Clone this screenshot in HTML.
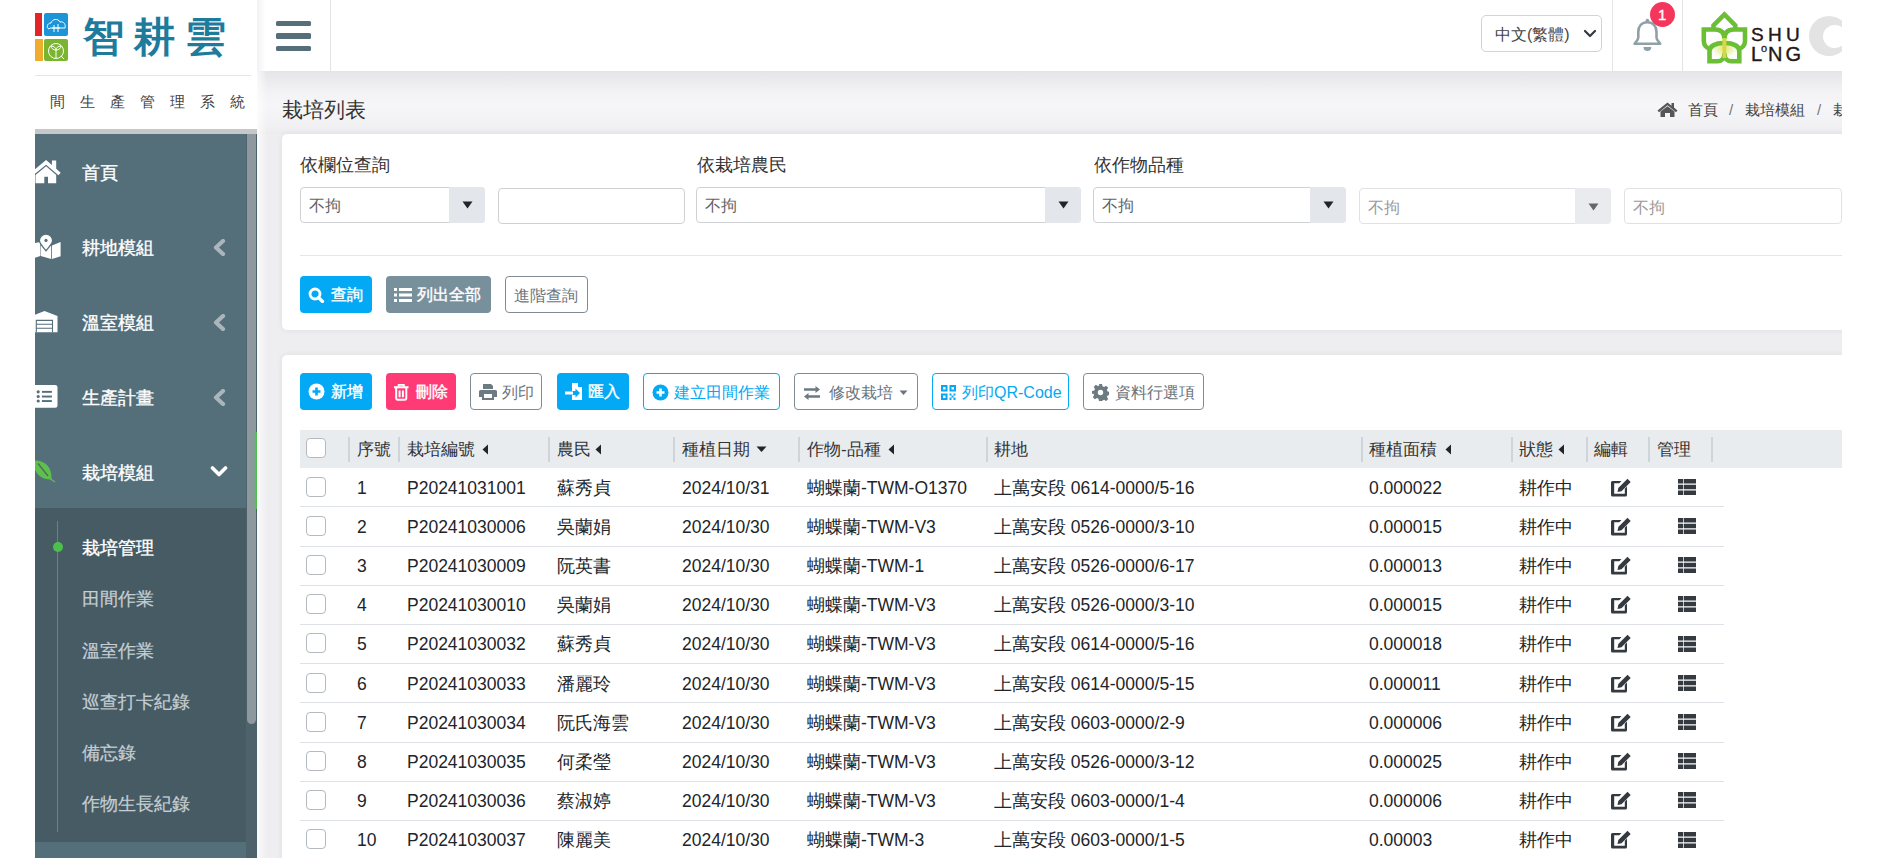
<!DOCTYPE html>
<html><head><meta charset="utf-8">
<style>
*{box-sizing:border-box;margin:0;padding:0}
html,body{width:1878px;height:858px;overflow:hidden;background:#fff;font-family:"Liberation Sans",sans-serif;color:#212529}
#wrap{position:absolute;left:0;top:0;width:1842px;height:858px;overflow:hidden;clip-path:inset(0 0 0 35px);background:#eeeef1}
.a{position:absolute}
.t{position:absolute;white-space:nowrap;line-height:1}
/* sidebar */
#side{position:absolute;left:35px;top:0;width:222px;height:858px;background:#546e7a}
#logo{position:absolute;left:0;top:0;width:222px;height:129px;background:#fff}
.mi{position:absolute;left:82px;color:#fff;font-size:17.5px;font-weight:normal;line-height:1;margin-top:1.5px;-webkit-text-stroke:0.35px #fff}
.si{position:absolute;left:82px;color:#c5ced3;font-size:17.5px;line-height:1;margin-top:1.5px;-webkit-text-stroke:0.2px #c5ced3}
/* header */
#hdr{position:absolute;left:257px;top:0;width:1585px;height:71px;background:#fff;box-shadow:0 2px 10px rgba(0,0,0,.08)}
.card{position:absolute;background:#fff;border-radius:5px;box-shadow:0 0 6px rgba(0,0,0,.07)}
.sel{position:absolute;height:36px;border:1px solid #cfd1d4;border-radius:4px;background:#fff}
.sel .add{position:absolute;right:-1px;top:-1px;bottom:-1px;width:36px;background:#e3e6ea;border-radius:0 4px 4px 0}
.sel .txt{position:absolute;left:7.5px;top:9.5px;font-size:15.5px;color:#5f6367;line-height:1;white-space:nowrap}
.btn{position:absolute;height:37px;border-radius:4px;font-size:16px;line-height:1;white-space:nowrap}
.btn span{position:absolute;top:11px}
.hd{font-size:17px;color:#333}
.td{font-size:17.5px;color:#212529}
</style></head><body>
<div id="wrap">
  <!-- sidebar -->
  <div class="a" style="left:35px;top:0;width:222px;height:858px;background:#546e7a"></div>
  <div class="a" style="left:35px;top:0;width:222px;height:129px;background:#fff"></div>
  <div class="a" style="left:35px;top:129px;width:222px;height:5px;background:#c6c7c8"></div>
  <!-- logo squares -->
  <div class="a" style="left:35px;top:13px;width:7px;height:23px;background:#e0262b"></div>
  <div class="a" style="left:44px;top:13px;width:24px;height:23px;background:#1b95d8;border-radius:2px"></div>
  <div class="a" style="left:35px;top:39px;width:8px;height:22px;background:#eead2e"></div>
  <div class="a" style="left:44px;top:39px;width:24px;height:22px;background:#7ab52f;border-radius:2px"></div>
  <svg class="a" style="left:44px;top:13px" width="24" height="48" viewBox="0 0 24 48" fill="none" stroke="#fff" stroke-width="1">
    <path d="M5 16c-3-1-2-6 2-6c1-4 7-5 9-1c4-1 6 3 5 6H6z"/><path d="M10 12v7M14 11v8M8 15h8"/>
    <circle cx="12" cy="38" r="7.5"/><path d="M12 45v-8M12 37c-3 0-5-2-5-4c3 0 5 2 5 4M12 37c3 0 5-2 5-4c-3 0-5 2-5 4M17 43l3 3"/>
  </svg>
  <div class="t" style="left:83px;top:17px;font-size:41px;font-weight:bold;color:#1f7b9c;letter-spacing:10px">智耕雲</div>
  <div class="a" style="left:35px;top:75px;width:216px;height:1px;background:#e6e6e6"></div>
  <div class="t" style="left:50px;top:94px;font-size:15px;color:#444;letter-spacing:15px">間生產管理系統</div>
  <!-- menu -->
    <div class="a" style="left:35px;top:508px;width:222px;height:334px;background:#475b65"></div>
    <div class="a" style="left:246px;top:134px;width:11px;height:724px;background:#4e626b"></div>
  <div class="a" style="left:247px;top:134px;width:9px;height:590px;background:#8d999f;border-radius:0 0 5px 5px"></div>
  <div class="a" style="left:250px;top:432px;width:6px;height:77px;background:linear-gradient(90deg,rgba(76,192,74,0),rgba(76,192,74,.2))"></div>
  <div class="a" style="left:256px;top:432px;width:1px;height:77px;background:#4cc04a"></div>
  <div class="mi" style="top:163px">首頁</div>
  <div class="mi" style="top:238px">耕地模組</div>
  <div class="mi" style="top:313px">溫室模組</div>
  <div class="mi" style="top:388px">生產計畫</div>
  <div class="mi" style="top:463px">栽培模組</div>
  <!-- menu icons -->
  <svg class="a" style="left:33px;top:159px" width="30" height="26" viewBox="0 0 30 26"><path fill="#fff" d="M13.1 1L-3 14.3l2.3 2.6L13.1 5.7l12.3 10.6 2.3-2.6L23.2 9.8V1.5h-4.3v4.6z M2.5 15.9L13.1 7.3l10.1 8.6V24.3H15V17.8H11.3V24.3H2.5z"/></svg>
  <svg class="a" style="left:33px;top:228px" width="30" height="34" viewBox="0 0 30 34"><path fill="#fff" d="M0 15.5L7.3 14V28L0 30.3z M7.8 18H18.2V31L7.8 28z M19 17.5L27.6 14V28.2L19 31z"/><path d="M13 22.8C10 19 6.4 15.8 6.4 12.6A6.6 6.6 0 0 1 19.6 12.6C19.6 15.8 16 19 13 22.8z" fill="#fff" stroke="#546e7a" stroke-width="1.3"/><circle cx="13" cy="12.4" r="1.6" fill="#546e7a"/></svg>
  <svg class="a" style="left:30px;top:300px" width="30" height="36" viewBox="0 0 30 36"><path fill="#fff" d="M1.5 16L14.5 11L27.5 16V32.2H1.5z"/><path d="M6.3 32.2V20.4H22.5V32.2M6.3 24.3H22.5M6.3 28.2H22.5" stroke="#546e7a" stroke-width="1.1" fill="none"/></svg>
  <svg class="a" style="left:33px;top:385px" width="26" height="23" viewBox="0 0 26 23"><rect x="-4" y="0" width="28.5" height="22.8" rx="2.5" fill="#fff"/><g fill="#546e7a"><circle cx="5.2" cy="6.8" r="1.6"/><circle cx="5.2" cy="11.5" r="1.6"/><circle cx="5.2" cy="16" r="1.6"/><rect x="8.9" y="5.9" width="10" height="1.9"/><rect x="8.9" y="10.6" width="10" height="1.9"/><rect x="8.9" y="15.1" width="10" height="1.9"/></g></svg>
  <svg class="a" style="left:30px;top:452px" width="30" height="34" viewBox="0 0 30 34"><path d="M3 8.5C12 8 22 12 21.5 27.5C10 28 4 21 3 8.5z" fill="#5dc04c"/><path d="M8 11.5L18 24" stroke="#50695f" stroke-width="1.3"/><path d="M20.5 27L25 30" stroke="#6fae6a" stroke-width="1.5"/></svg>
  <!-- chevrons -->
  <svg class="a" style="left:213px;top:239px" width="13" height="17" viewBox="0 0 13 17"><path d="M10 2L3 8.5L10 15" stroke="#aab6bc" stroke-width="4.2" fill="none" stroke-linecap="round" stroke-linejoin="round"/></svg>
  <svg class="a" style="left:213px;top:314px" width="13" height="17" viewBox="0 0 13 17"><path d="M10 2L3 8.5L10 15" stroke="#aab6bc" stroke-width="4.2" fill="none" stroke-linecap="round" stroke-linejoin="round"/></svg>
  <svg class="a" style="left:213px;top:389px" width="13" height="17" viewBox="0 0 13 17"><path d="M10 2L3 8.5L10 15" stroke="#aab6bc" stroke-width="4.2" fill="none" stroke-linecap="round" stroke-linejoin="round"/></svg>
  <svg class="a" style="left:210px;top:465px" width="18" height="13" viewBox="0 0 18 13"><path d="M2.5 3L9 9.5L15.5 3" stroke="#fff" stroke-width="3.6" fill="none" stroke-linecap="round" stroke-linejoin="round"/></svg>
  <!-- submenu -->
  <div class="a" style="left:57px;top:521px;width:1px;height:311px;background:#6d7f88"></div>
  <div class="a" style="left:52.5px;top:542px;width:10px;height:10px;border-radius:50%;background:#4cc04a"></div>
  <div class="mi" style="top:538px">栽培管理</div>
  <div class="si" style="top:589px">田間作業</div>
  <div class="si" style="top:641px">溫室作業</div>
  <div class="si" style="top:692px">巡查打卡紀錄</div>
  <div class="si" style="top:743px">備忘錄</div>
  <div class="si" style="top:794px">作物生長紀錄</div>

  <!-- header -->
  <div class="a" style="left:257px;top:71px;width:1585px;height:63px;background:linear-gradient(#e5e5e8 0px,#f3f3f5 22px,#f6f6f8 35px,#f1f1f3 55px,#ececef 63px)"></div>
  <div class="a" style="left:257px;top:0;width:1585px;height:71px;background:#fff"></div>
  <div class="a" style="left:257px;top:71px;width:10px;height:787px;background:linear-gradient(90deg,rgba(255,255,255,.7),rgba(255,255,255,0))"></div>
  <div class="a" style="left:257px;top:0;width:9px;height:71px;background:linear-gradient(90deg,rgba(0,0,0,.05),rgba(0,0,0,0))"></div>
  <div class="a" style="left:276px;top:20.5px;width:35px;height:5.5px;background:#546e7a;border-radius:1.5px"></div>
  <div class="a" style="left:276px;top:33px;width:35px;height:5.5px;background:#546e7a;border-radius:1.5px"></div>
  <div class="a" style="left:276px;top:45.5px;width:35px;height:5.5px;background:#546e7a;border-radius:1.5px"></div>
  <div class="a" style="left:330px;top:0;width:1px;height:71px;background:#e4e4e4"></div>
  <div class="a" style="left:1612px;top:0;width:1px;height:71px;background:#e4e4e4"></div>
  <div class="a" style="left:1682px;top:0;width:1px;height:71px;background:#e4e4e4"></div>
  <!-- lang select -->
  <div class="a" style="left:1481px;top:15px;width:121px;height:37px;border:1px solid #d0d4d8;border-radius:5px"></div>
  <div class="t" style="left:1495px;top:27px;font-size:16px;color:#444">中文(繁體)</div>
  <svg class="a" style="left:1583px;top:29px" width="14" height="10" viewBox="0 0 14 10"><path d="M2 2l5 5 5-5" stroke="#343a40" stroke-width="2.2" fill="none" stroke-linecap="round" stroke-linejoin="round"/></svg>
  <!-- bell -->
  <svg class="a" style="left:1632px;top:17px" width="31" height="35" viewBox="0 0 31 35"><path d="M15.4 5.2C9.8 5.2 6.3 9.2 6.3 15V20.5C6.3 23.3 3.6 24.8 2.6 26.8H28.2C27.2 24.8 24.5 23.3 24.5 20.5V15C24.5 9.2 21 5.2 15.4 5.2z" stroke="#90a0a8" stroke-width="2.6" fill="none" stroke-linejoin="round"/><circle cx="15.4" cy="3.6" r="1.8" fill="#90a0a8"/><path d="M11.5 30H19.3A3.9 3.9 0 0 1 11.5 30z" fill="#90a0a8"/></svg>
  <div class="a" style="left:1650px;top:2px;width:25px;height:25px;border-radius:50%;background:#f5365c"></div>
  <div class="t" style="left:1658px;top:7px;font-size:15px;color:#fff;-webkit-text-stroke:0.4px #fff">1</div>
  <!-- shulong logo -->
  <svg class="a" style="left:1698px;top:8px" width="52" height="58" viewBox="0 0 52 58">
    <defs><radialGradient id="lg" cx="50%" cy="50%" r="50%"><stop offset="0" stop-color="#e8e86a"/><stop offset="0.5" stop-color="#eef5c0"/><stop offset="1" stop-color="#ffffff" stop-opacity="0"/></radialGradient></defs>
    <ellipse cx="26.4" cy="40" rx="16" ry="12" fill="url(#lg)"/>
    <g stroke="#6abf35" stroke-width="4.6" fill="none" stroke-linejoin="miter">
    <path d="M15.5 23V17.5L26.4 6.5L37.3 17.5V23"/>
    <path d="M26.4 31C26.4 24 22.5 21.5 17 21.5H5.8V33C5.8 37 8.5 40.5 13 41"/>
    <path d="M26.4 31C26.4 24 30.3 21.5 35.8 21.5H47V33C47 37 44.3 40.5 39.8 41"/>
    <path d="M25.5 35C18 35 11.5 38 11.5 43V53.3H19.5C23.8 53.3 26.4 50 26.4 45.5"/>
    <path d="M27.3 35C34.8 35 41.3 38 41.3 43V53.3H33.3C29 53.3 26.4 50 26.4 45.5"/>
    </g>
    <path d="M26.4 30V50" stroke="#d6d84a" stroke-width="4"/>
  </svg>
  <div class="t" style="left:1751px;top:24.5px;font-size:19px;color:#231815;letter-spacing:4.3px;-webkit-text-stroke:0.4px #231815">SHU</div>
  <div class="t" style="left:1751px;top:43.5px;font-size:20px;color:#231815;-webkit-text-stroke:0.4px #231815">L</div>
  <div class="t" style="left:1761px;top:43px;font-size:11px;color:#231815;-webkit-text-stroke:0.3px #231815">o</div>
  <div class="t" style="left:1768px;top:43.5px;font-size:20px;color:#231815;letter-spacing:3px;-webkit-text-stroke:0.4px #231815">NG</div>
  <div class="a" style="left:1809px;top:16px;width:40px;height:40px;border-radius:50%;background:#e3e3e3"></div>
  <div class="a" style="left:1823px;top:25px;width:24px;height:23px;border-radius:50%;background:#fff"></div>
  <!-- title / breadcrumb -->
  <div class="t" style="left:282px;top:99px;font-size:21px;color:#333">栽培列表</div>
  <svg class="a" style="left:1657px;top:102px" width="21" height="15" viewBox="0 0 21 15"><path fill="#555" d="M10.5 0.5L0.5 8.5l1.5 1.7L10.5 3.3l8.5 6.9 1.5-1.7-3.5-2.9V1h-2.5v2.7z M3.5 9.5V15h4.5v-4h5v4h4.5V9.5L10.5 4.2z"/></svg>
  <div class="t" style="left:1688px;top:102px;font-size:15px;color:#444">首頁</div>
  <div class="t" style="left:1729px;top:102px;font-size:15px;color:#777">/</div>
  <div class="t" style="left:1745px;top:102px;font-size:15px;color:#444">栽培模組</div>
  <div class="t" style="left:1817px;top:102px;font-size:15px;color:#777">/</div>
  <div class="t" style="left:1833px;top:102px;font-size:15px;color:#444">栽</div>


  <div class="card" style="left:282px;top:134px;width:1600px;height:196px"></div>
  <div class="t" style="left:300px;top:157px;font-size:17.5px;color:#333">依欄位查詢</div>
  <div class="t" style="left:697px;top:157px;font-size:17.5px;color:#333">依栽培農民</div>
  <div class="t" style="left:1094px;top:157px;font-size:17.5px;color:#333">依作物品種</div>
  <div class="sel" style="left:300px;top:187px;width:185px"><div class="add"></div><div class="txt">不拘</div></div>
  <svg class="a" style="left:462px;top:201px" width="11" height="8" viewBox="0 0 11 8"><path d="M0.5 0.5h10L5.5 7.5z" fill="#212529"/></svg>
  <div class="sel" style="left:498px;top:188px;width:187px"></div>
  <div class="sel" style="left:696px;top:187px;width:385px"><div class="add"></div><div class="txt">不拘</div></div>
  <svg class="a" style="left:1058px;top:201px" width="11" height="8" viewBox="0 0 11 8"><path d="M0.5 0.5h10L5.5 7.5z" fill="#212529"/></svg>
  <div class="sel" style="left:1093px;top:187px;width:253px"><div class="add"></div><div class="txt">不拘</div></div>
  <svg class="a" style="left:1323px;top:201px" width="11" height="8" viewBox="0 0 11 8"><path d="M0.5 0.5h10L5.5 7.5z" fill="#212529"/></svg>
  <div class="sel" style="left:1359px;top:188px;width:252px;border-color:#dfe2e5"><div class="add" style="background:#e9ebee"></div><div class="txt" style="color:#9a9a9a;top:11px">不拘</div></div>
  <svg class="a" style="left:1588px;top:203px" width="11" height="8" viewBox="0 0 11 8"><path d="M0.5 0.5h10L5.5 7.5z" fill="#666"/></svg>
  <div class="sel" style="left:1624px;top:188px;width:218px;border-color:#dfe2e5"><div class="txt" style="color:#9a9a9a;top:11px">不拘</div></div>
  <div class="a" style="left:300px;top:255px;width:1542px;height:1px;background:#e4e6e8"></div>
  <!-- buttons -->
  <div class="btn" style="left:300px;top:276px;width:72px;background:#03a9f4;color:#fff;-webkit-text-stroke:0.4px #fff">
    <svg class="a" style="left:8px;top:11px" width="17" height="16" viewBox="0 0 17 16"><circle cx="7" cy="7" r="5" stroke="#fff" stroke-width="2.8" fill="none"/><path d="M10.5 10.5l4 4" stroke="#fff" stroke-width="3.2" stroke-linecap="round"/></svg>
    <span style="left:31px">查詢</span></div>
  <div class="btn" style="left:386px;top:276px;width:105px;background:#78909c;color:#fff;-webkit-text-stroke:0.4px #fff">
    <svg class="a" style="left:8px;top:12px" width="18" height="14" viewBox="0 0 18 14"><path fill="#fff" d="M0 0h3v3H0zM5 0h13v3H5zM0 5.5h3v3H0zM5 5.5h13v3H5zM0 11h3v3H0zM5 11h13v3H5z"/></svg>
    <span style="left:31px">列出全部</span></div>
  <div class="btn" style="left:505px;top:276px;width:83px;border:1px solid #7f8c93;color:#6c757d">
    <span style="left:8px">進階查詢</span></div>

  <div class="card" style="left:282px;top:355px;width:1600px;height:600px"></div>
  <!-- action buttons -->
  <div class="btn" style="left:300px;top:373px;width:72px;background:#03a9f4;color:#fff;-webkit-text-stroke:0.4px #fff">
    <svg class="a" style="left:8px;top:10px" width="17" height="17" viewBox="0 0 17 17"><circle cx="8.5" cy="8.5" r="8" fill="#fff"/><path d="M8.5 4.5v8M4.5 8.5h8" stroke="#03a9f4" stroke-width="2.6"/></svg>
    <span style="left:31px">新增</span></div>
  <div class="btn" style="left:386px;top:373px;width:70px;background:#ff3a75;color:#fff;-webkit-text-stroke:0.4px #fff">
    <svg class="a" style="left:8px;top:11px" width="15" height="17" viewBox="0 0 15 17"><path d="M0 2.2H14.5V4.3H0z" fill="#fff"/><path d="M4.6 2.5V0.9H9.9V2.5" stroke="#fff" stroke-width="1.7" fill="none"/><path d="M2.2 4V14.6A1.1 1.1 0 0 0 3.3 15.7H11.2A1.1 1.1 0 0 0 12.3 14.6V4M5.6 6.5V13.2M8.9 6.5V13.2" stroke="#fff" stroke-width="2" fill="none"/></svg>
    <span style="left:30px">刪除</span></div>
  <div class="btn" style="left:470px;top:373px;width:72px;border:1px solid #7f8c93;color:#6c757d">
    <svg class="a" style="left:8px;top:10px" width="18" height="16" viewBox="0 0 18 16"><path fill="#6c7a82" d="M4 0h8l2 2v3H4z M1.5 6h15A1.5 1.5 0 0 1 18 7.5V13h-3v3H3v-3H0V7.5A1.5 1.5 0 0 1 1.5 6z"/><path fill="#fff" d="M5 10h8v4H5z"/></svg>
    <span style="left:31px">列印</span></div>
  <div class="btn" style="left:557px;top:373px;width:72px;background:#03a9f4;color:#fff;-webkit-text-stroke:0.4px #fff">
    <svg class="a" style="left:8px;top:10px" width="18" height="17" viewBox="0 0 18 17"><path fill="#fff" d="M7 0h6l4 4v13H7v-5h3.5v2.5L15 10l-4.5-4.5V8H7z M13 0v4h4z"/><path fill="#fff" d="M0 8.5h8v3H0z"/></svg>
    <span style="left:31px">匯入</span></div>
  <div class="btn" style="left:643px;top:373px;width:137px;border:1px solid #03a9f4;color:#03a9f4">
    <svg class="a" style="left:8px;top:10px" width="17" height="17" viewBox="0 0 17 17"><circle cx="8.5" cy="8.5" r="8" fill="#03a9f4"/><path d="M8.5 4.5v8M4.5 8.5h8" stroke="#fff" stroke-width="2.6"/></svg>
    <span style="left:30px">建立田間作業</span></div>
  <div class="btn" style="left:794px;top:373px;width:124px;border:1px solid #7f8c93;color:#6c757d">
    <svg class="a" style="left:8px;top:12px" width="18" height="14" viewBox="0 0 18 14"><path fill="#6c7a82" d="M12.5 0l4.5 3.5-4.5 3.5V4.8H1V2.2h11.5z M5.5 7v2.2H17v2.6H5.5V14L1 10.5z"/></svg>
    <span style="left:34px">修改栽培</span>
    <svg class="a" style="left:104px;top:16px" width="9" height="6" viewBox="0 0 9 6"><path d="M0.5 0.5h8L4.5 5z" fill="#6c757d"/></svg></div>
  <div class="btn" style="left:932px;top:373px;width:137px;border:1px solid #03a9f4;color:#03a9f4">
    <svg class="a" style="left:8px;top:11px" width="15" height="15" viewBox="0 0 15 15"><path fill="#03a9f4" d="M0 0h6.5v6.5H0zM2 2v2.5h2.5V2zM8.5 0H15v6.5H8.5zM10.5 2v2.5H13V2zM0 8.5h6.5V15H0zM2 10.5V13h2.5v-2.5zM8.5 8.5h2v2h-2zM12.5 8.5h2v2h-2zM10.5 10.5h2v2h-2zM8.5 12.5h2V15h-2zM12.5 12.5h2V15h-2z"/></svg>
    <span style="left:29px">列印QR-Code</span></div>
  <div class="btn" style="left:1083px;top:373px;width:121px;border:1px solid #7f8c93;color:#6c757d">
    <svg class="a" style="left:8px;top:10px" width="17" height="17" viewBox="0 0 17 17"><path fill="#6c7a82" d="M7 0h3l.5 2.3 1.6.7 2-1.3 2.1 2.1-1.3 2 .7 1.6 2.3.5v3l-2.3.5-.7 1.6 1.3 2-2.1 2.1-2-1.3-1.6.7L10 17H7l-.5-2.3-1.6-.7-2 1.3-2.1-2.1 1.3-2-.7-1.6L0 10V7l2.3-.5.7-1.6-1.3-2 2.1-2.1 2 1.3 1.6-.7z"/><circle cx="8.5" cy="8.5" r="2.7" fill="#fff"/></svg>
    <span style="left:31px">資料行選項</span></div>

  <div class="a" style="left:300px;top:430px;width:1542px;height:38px;background:#e9ecef"></div>
  <div class="a" style="left:306px;top:438px;width:20px;height:20px;border:1px solid #b4bac0;border-radius:4px;background:#fff"></div>
  <div class="a" style="left:348px;top:437px;width:2px;height:25px;background:#cfd4d9"></div>
  <div class="a" style="left:398px;top:437px;width:2px;height:25px;background:#cfd4d9"></div>
  <div class="a" style="left:548px;top:437px;width:2px;height:25px;background:#cfd4d9"></div>
  <div class="a" style="left:673px;top:437px;width:2px;height:25px;background:#cfd4d9"></div>
  <div class="a" style="left:798px;top:437px;width:2px;height:25px;background:#cfd4d9"></div>
  <div class="a" style="left:986px;top:437px;width:2px;height:25px;background:#cfd4d9"></div>
  <div class="a" style="left:1361px;top:437px;width:2px;height:25px;background:#cfd4d9"></div>
  <div class="a" style="left:1511px;top:437px;width:2px;height:25px;background:#cfd4d9"></div>
  <div class="a" style="left:1586px;top:437px;width:2px;height:25px;background:#cfd4d9"></div>
  <div class="a" style="left:1648px;top:437px;width:2px;height:25px;background:#cfd4d9"></div>
  <div class="a" style="left:1711px;top:437px;width:2px;height:25px;background:#cfd4d9"></div>
  <div class="t hd" style="margin-top:1px;left:357px;top:440px">序號</div>
  <div class="t hd" style="margin-top:1px;left:407px;top:440px">栽培編號</div>
  <div class="t hd" style="margin-top:1px;left:557px;top:440px">農民</div>
  <div class="t hd" style="margin-top:1px;left:682px;top:440px">種植日期</div>
  <div class="t hd" style="margin-top:1px;left:807px;top:440px">作物-品種</div>
  <div class="t hd" style="margin-top:1px;left:994px;top:440px">耕地</div>
  <div class="t hd" style="margin-top:1px;left:1369px;top:440px">種植面積</div>
  <div class="t hd" style="margin-top:1px;left:1519px;top:440px">狀態</div>
  <div class="t hd" style="margin-top:1px;left:1594px;top:440px">編輯</div>
  <div class="t hd" style="margin-top:1px;left:1657px;top:440px">管理</div>
<svg class="a" style="left:482px;top:444px" width="7" height="11" viewBox="0 0 7 11"><path d="M6 0.5v10L0.5 5.5z" fill="#212529"/></svg><svg class="a" style="left:595px;top:444px" width="7" height="11" viewBox="0 0 7 11"><path d="M6 0.5v10L0.5 5.5z" fill="#212529"/></svg><svg class="a" style="left:756px;top:446px" width="11" height="7" viewBox="0 0 11 7"><path d="M0.5 0.5h10L5.5 6z" fill="#212529"/></svg><svg class="a" style="left:888px;top:444px" width="7" height="11" viewBox="0 0 7 11"><path d="M6 0.5v10L0.5 5.5z" fill="#212529"/></svg><svg class="a" style="left:1445px;top:444px" width="7" height="11" viewBox="0 0 7 11"><path d="M6 0.5v10L0.5 5.5z" fill="#212529"/></svg><svg class="a" style="left:1558px;top:444px" width="7" height="11" viewBox="0 0 7 11"><path d="M6 0.5v10L0.5 5.5z" fill="#212529"/></svg>  <div class="a" style="left:306px;top:476.6px;width:20px;height:20px;border:1px solid #b4bac0;border-radius:4px;background:#fff"></div>
  <div class="t td" style="margin-top:1px;left:357px;top:478.6px">1</div>
  <div class="t td" style="margin-top:1px;left:407px;top:478.6px">P20241031001</div>
  <div class="t td" style="margin-top:1px;left:557px;top:478.6px">蘇秀貞</div>
  <div class="t td" style="margin-top:1px;left:682px;top:478.6px">2024/10/31</div>
  <div class="t td" style="margin-top:1px;left:807px;top:478.6px">蝴蝶蘭-TWM-O1370</div>
  <div class="t td" style="margin-top:1px;left:994px;top:478.6px">上萬安段 0614-0000/5-16</div>
  <div class="t td" style="margin-top:1px;left:1369px;top:478.6px">0.000022</div>
  <div class="t td" style="margin-top:1px;left:1519px;top:478.6px">耕作中</div>
  <svg class="a" style="left:1611px;top:477.6px" width="21" height="19" viewBox="0 0 21 19"><path fill="#343a40" d="M1.5 3h9l-2.2 2.2H3.2v10.6h10.6v-5.1L16 8.5v8.5a1.5 1.5 0 0 1-1.5 1.5H1.5A1.5 1.5 0 0 1 0 17V4.5A1.5 1.5 0 0 1 1.5 3z M16.5 0.8l3.2 3.2-9.2 9.2-4 .8.8-4z"/></svg>
  <svg class="a" style="left:1678px;top:478.8px" width="18" height="16" viewBox="0 0 18 16"><path fill="#343a40" d="M0 0h5.3v4.6H0zM6 0H18v4.6H6zM0 5.7h5.3v4.6H0zM6 5.7H18v4.6H6zM0 11.4h5.3V16H0zM6 11.4H18V16H6z"/></svg>
  <div class="a" style="left:300px;top:506.4px;width:1424px;height:1px;background:#dee2e6"></div>
  <div class="a" style="left:306px;top:515.8px;width:20px;height:20px;border:1px solid #b4bac0;border-radius:4px;background:#fff"></div>
  <div class="t td" style="margin-top:1px;left:357px;top:517.8px">2</div>
  <div class="t td" style="margin-top:1px;left:407px;top:517.8px">P20241030006</div>
  <div class="t td" style="margin-top:1px;left:557px;top:517.8px">吳蘭娟</div>
  <div class="t td" style="margin-top:1px;left:682px;top:517.8px">2024/10/30</div>
  <div class="t td" style="margin-top:1px;left:807px;top:517.8px">蝴蝶蘭-TWM-V3</div>
  <div class="t td" style="margin-top:1px;left:994px;top:517.8px">上萬安段 0526-0000/3-10</div>
  <div class="t td" style="margin-top:1px;left:1369px;top:517.8px">0.000015</div>
  <div class="t td" style="margin-top:1px;left:1519px;top:517.8px">耕作中</div>
  <svg class="a" style="left:1611px;top:516.8px" width="21" height="19" viewBox="0 0 21 19"><path fill="#343a40" d="M1.5 3h9l-2.2 2.2H3.2v10.6h10.6v-5.1L16 8.5v8.5a1.5 1.5 0 0 1-1.5 1.5H1.5A1.5 1.5 0 0 1 0 17V4.5A1.5 1.5 0 0 1 1.5 3z M16.5 0.8l3.2 3.2-9.2 9.2-4 .8.8-4z"/></svg>
  <svg class="a" style="left:1678px;top:518.0px" width="18" height="16" viewBox="0 0 18 16"><path fill="#343a40" d="M0 0h5.3v4.6H0zM6 0H18v4.6H6zM0 5.7h5.3v4.6H0zM6 5.7H18v4.6H6zM0 11.4h5.3V16H0zM6 11.4H18V16H6z"/></svg>
  <div class="a" style="left:300px;top:545.6px;width:1424px;height:1px;background:#dee2e6"></div>
  <div class="a" style="left:306px;top:555.0px;width:20px;height:20px;border:1px solid #b4bac0;border-radius:4px;background:#fff"></div>
  <div class="t td" style="margin-top:1px;left:357px;top:557.0px">3</div>
  <div class="t td" style="margin-top:1px;left:407px;top:557.0px">P20241030009</div>
  <div class="t td" style="margin-top:1px;left:557px;top:557.0px">阮英書</div>
  <div class="t td" style="margin-top:1px;left:682px;top:557.0px">2024/10/30</div>
  <div class="t td" style="margin-top:1px;left:807px;top:557.0px">蝴蝶蘭-TWM-1</div>
  <div class="t td" style="margin-top:1px;left:994px;top:557.0px">上萬安段 0526-0000/6-17</div>
  <div class="t td" style="margin-top:1px;left:1369px;top:557.0px">0.000013</div>
  <div class="t td" style="margin-top:1px;left:1519px;top:557.0px">耕作中</div>
  <svg class="a" style="left:1611px;top:556.0px" width="21" height="19" viewBox="0 0 21 19"><path fill="#343a40" d="M1.5 3h9l-2.2 2.2H3.2v10.6h10.6v-5.1L16 8.5v8.5a1.5 1.5 0 0 1-1.5 1.5H1.5A1.5 1.5 0 0 1 0 17V4.5A1.5 1.5 0 0 1 1.5 3z M16.5 0.8l3.2 3.2-9.2 9.2-4 .8.8-4z"/></svg>
  <svg class="a" style="left:1678px;top:557.2px" width="18" height="16" viewBox="0 0 18 16"><path fill="#343a40" d="M0 0h5.3v4.6H0zM6 0H18v4.6H6zM0 5.7h5.3v4.6H0zM6 5.7H18v4.6H6zM0 11.4h5.3V16H0zM6 11.4H18V16H6z"/></svg>
  <div class="a" style="left:300px;top:584.8px;width:1424px;height:1px;background:#dee2e6"></div>
  <div class="a" style="left:306px;top:594.2px;width:20px;height:20px;border:1px solid #b4bac0;border-radius:4px;background:#fff"></div>
  <div class="t td" style="margin-top:1px;left:357px;top:596.2px">4</div>
  <div class="t td" style="margin-top:1px;left:407px;top:596.2px">P20241030010</div>
  <div class="t td" style="margin-top:1px;left:557px;top:596.2px">吳蘭娟</div>
  <div class="t td" style="margin-top:1px;left:682px;top:596.2px">2024/10/30</div>
  <div class="t td" style="margin-top:1px;left:807px;top:596.2px">蝴蝶蘭-TWM-V3</div>
  <div class="t td" style="margin-top:1px;left:994px;top:596.2px">上萬安段 0526-0000/3-10</div>
  <div class="t td" style="margin-top:1px;left:1369px;top:596.2px">0.000015</div>
  <div class="t td" style="margin-top:1px;left:1519px;top:596.2px">耕作中</div>
  <svg class="a" style="left:1611px;top:595.2px" width="21" height="19" viewBox="0 0 21 19"><path fill="#343a40" d="M1.5 3h9l-2.2 2.2H3.2v10.6h10.6v-5.1L16 8.5v8.5a1.5 1.5 0 0 1-1.5 1.5H1.5A1.5 1.5 0 0 1 0 17V4.5A1.5 1.5 0 0 1 1.5 3z M16.5 0.8l3.2 3.2-9.2 9.2-4 .8.8-4z"/></svg>
  <svg class="a" style="left:1678px;top:596.4px" width="18" height="16" viewBox="0 0 18 16"><path fill="#343a40" d="M0 0h5.3v4.6H0zM6 0H18v4.6H6zM0 5.7h5.3v4.6H0zM6 5.7H18v4.6H6zM0 11.4h5.3V16H0zM6 11.4H18V16H6z"/></svg>
  <div class="a" style="left:300px;top:624.0px;width:1424px;height:1px;background:#dee2e6"></div>
  <div class="a" style="left:306px;top:633.4px;width:20px;height:20px;border:1px solid #b4bac0;border-radius:4px;background:#fff"></div>
  <div class="t td" style="margin-top:1px;left:357px;top:635.4px">5</div>
  <div class="t td" style="margin-top:1px;left:407px;top:635.4px">P20241030032</div>
  <div class="t td" style="margin-top:1px;left:557px;top:635.4px">蘇秀貞</div>
  <div class="t td" style="margin-top:1px;left:682px;top:635.4px">2024/10/30</div>
  <div class="t td" style="margin-top:1px;left:807px;top:635.4px">蝴蝶蘭-TWM-V3</div>
  <div class="t td" style="margin-top:1px;left:994px;top:635.4px">上萬安段 0614-0000/5-16</div>
  <div class="t td" style="margin-top:1px;left:1369px;top:635.4px">0.000018</div>
  <div class="t td" style="margin-top:1px;left:1519px;top:635.4px">耕作中</div>
  <svg class="a" style="left:1611px;top:634.4px" width="21" height="19" viewBox="0 0 21 19"><path fill="#343a40" d="M1.5 3h9l-2.2 2.2H3.2v10.6h10.6v-5.1L16 8.5v8.5a1.5 1.5 0 0 1-1.5 1.5H1.5A1.5 1.5 0 0 1 0 17V4.5A1.5 1.5 0 0 1 1.5 3z M16.5 0.8l3.2 3.2-9.2 9.2-4 .8.8-4z"/></svg>
  <svg class="a" style="left:1678px;top:635.6px" width="18" height="16" viewBox="0 0 18 16"><path fill="#343a40" d="M0 0h5.3v4.6H0zM6 0H18v4.6H6zM0 5.7h5.3v4.6H0zM6 5.7H18v4.6H6zM0 11.4h5.3V16H0zM6 11.4H18V16H6z"/></svg>
  <div class="a" style="left:300px;top:663.2px;width:1424px;height:1px;background:#dee2e6"></div>
  <div class="a" style="left:306px;top:672.6px;width:20px;height:20px;border:1px solid #b4bac0;border-radius:4px;background:#fff"></div>
  <div class="t td" style="margin-top:1px;left:357px;top:674.6px">6</div>
  <div class="t td" style="margin-top:1px;left:407px;top:674.6px">P20241030033</div>
  <div class="t td" style="margin-top:1px;left:557px;top:674.6px">潘麗玲</div>
  <div class="t td" style="margin-top:1px;left:682px;top:674.6px">2024/10/30</div>
  <div class="t td" style="margin-top:1px;left:807px;top:674.6px">蝴蝶蘭-TWM-V3</div>
  <div class="t td" style="margin-top:1px;left:994px;top:674.6px">上萬安段 0614-0000/5-15</div>
  <div class="t td" style="margin-top:1px;left:1369px;top:674.6px">0.000011</div>
  <div class="t td" style="margin-top:1px;left:1519px;top:674.6px">耕作中</div>
  <svg class="a" style="left:1611px;top:673.6px" width="21" height="19" viewBox="0 0 21 19"><path fill="#343a40" d="M1.5 3h9l-2.2 2.2H3.2v10.6h10.6v-5.1L16 8.5v8.5a1.5 1.5 0 0 1-1.5 1.5H1.5A1.5 1.5 0 0 1 0 17V4.5A1.5 1.5 0 0 1 1.5 3z M16.5 0.8l3.2 3.2-9.2 9.2-4 .8.8-4z"/></svg>
  <svg class="a" style="left:1678px;top:674.8px" width="18" height="16" viewBox="0 0 18 16"><path fill="#343a40" d="M0 0h5.3v4.6H0zM6 0H18v4.6H6zM0 5.7h5.3v4.6H0zM6 5.7H18v4.6H6zM0 11.4h5.3V16H0zM6 11.4H18V16H6z"/></svg>
  <div class="a" style="left:300px;top:702.4px;width:1424px;height:1px;background:#dee2e6"></div>
  <div class="a" style="left:306px;top:711.8px;width:20px;height:20px;border:1px solid #b4bac0;border-radius:4px;background:#fff"></div>
  <div class="t td" style="margin-top:1px;left:357px;top:713.8px">7</div>
  <div class="t td" style="margin-top:1px;left:407px;top:713.8px">P20241030034</div>
  <div class="t td" style="margin-top:1px;left:557px;top:713.8px">阮氏海雲</div>
  <div class="t td" style="margin-top:1px;left:682px;top:713.8px">2024/10/30</div>
  <div class="t td" style="margin-top:1px;left:807px;top:713.8px">蝴蝶蘭-TWM-V3</div>
  <div class="t td" style="margin-top:1px;left:994px;top:713.8px">上萬安段 0603-0000/2-9</div>
  <div class="t td" style="margin-top:1px;left:1369px;top:713.8px">0.000006</div>
  <div class="t td" style="margin-top:1px;left:1519px;top:713.8px">耕作中</div>
  <svg class="a" style="left:1611px;top:712.8px" width="21" height="19" viewBox="0 0 21 19"><path fill="#343a40" d="M1.5 3h9l-2.2 2.2H3.2v10.6h10.6v-5.1L16 8.5v8.5a1.5 1.5 0 0 1-1.5 1.5H1.5A1.5 1.5 0 0 1 0 17V4.5A1.5 1.5 0 0 1 1.5 3z M16.5 0.8l3.2 3.2-9.2 9.2-4 .8.8-4z"/></svg>
  <svg class="a" style="left:1678px;top:714.0px" width="18" height="16" viewBox="0 0 18 16"><path fill="#343a40" d="M0 0h5.3v4.6H0zM6 0H18v4.6H6zM0 5.7h5.3v4.6H0zM6 5.7H18v4.6H6zM0 11.4h5.3V16H0zM6 11.4H18V16H6z"/></svg>
  <div class="a" style="left:300px;top:741.6px;width:1424px;height:1px;background:#dee2e6"></div>
  <div class="a" style="left:306px;top:751.0px;width:20px;height:20px;border:1px solid #b4bac0;border-radius:4px;background:#fff"></div>
  <div class="t td" style="margin-top:1px;left:357px;top:753.0px">8</div>
  <div class="t td" style="margin-top:1px;left:407px;top:753.0px">P20241030035</div>
  <div class="t td" style="margin-top:1px;left:557px;top:753.0px">何柔瑩</div>
  <div class="t td" style="margin-top:1px;left:682px;top:753.0px">2024/10/30</div>
  <div class="t td" style="margin-top:1px;left:807px;top:753.0px">蝴蝶蘭-TWM-V3</div>
  <div class="t td" style="margin-top:1px;left:994px;top:753.0px">上萬安段 0526-0000/3-12</div>
  <div class="t td" style="margin-top:1px;left:1369px;top:753.0px">0.000025</div>
  <div class="t td" style="margin-top:1px;left:1519px;top:753.0px">耕作中</div>
  <svg class="a" style="left:1611px;top:752.0px" width="21" height="19" viewBox="0 0 21 19"><path fill="#343a40" d="M1.5 3h9l-2.2 2.2H3.2v10.6h10.6v-5.1L16 8.5v8.5a1.5 1.5 0 0 1-1.5 1.5H1.5A1.5 1.5 0 0 1 0 17V4.5A1.5 1.5 0 0 1 1.5 3z M16.5 0.8l3.2 3.2-9.2 9.2-4 .8.8-4z"/></svg>
  <svg class="a" style="left:1678px;top:753.2px" width="18" height="16" viewBox="0 0 18 16"><path fill="#343a40" d="M0 0h5.3v4.6H0zM6 0H18v4.6H6zM0 5.7h5.3v4.6H0zM6 5.7H18v4.6H6zM0 11.4h5.3V16H0zM6 11.4H18V16H6z"/></svg>
  <div class="a" style="left:300px;top:780.8px;width:1424px;height:1px;background:#dee2e6"></div>
  <div class="a" style="left:306px;top:790.2px;width:20px;height:20px;border:1px solid #b4bac0;border-radius:4px;background:#fff"></div>
  <div class="t td" style="margin-top:1px;left:357px;top:792.2px">9</div>
  <div class="t td" style="margin-top:1px;left:407px;top:792.2px">P20241030036</div>
  <div class="t td" style="margin-top:1px;left:557px;top:792.2px">蔡淑婷</div>
  <div class="t td" style="margin-top:1px;left:682px;top:792.2px">2024/10/30</div>
  <div class="t td" style="margin-top:1px;left:807px;top:792.2px">蝴蝶蘭-TWM-V3</div>
  <div class="t td" style="margin-top:1px;left:994px;top:792.2px">上萬安段 0603-0000/1-4</div>
  <div class="t td" style="margin-top:1px;left:1369px;top:792.2px">0.000006</div>
  <div class="t td" style="margin-top:1px;left:1519px;top:792.2px">耕作中</div>
  <svg class="a" style="left:1611px;top:791.2px" width="21" height="19" viewBox="0 0 21 19"><path fill="#343a40" d="M1.5 3h9l-2.2 2.2H3.2v10.6h10.6v-5.1L16 8.5v8.5a1.5 1.5 0 0 1-1.5 1.5H1.5A1.5 1.5 0 0 1 0 17V4.5A1.5 1.5 0 0 1 1.5 3z M16.5 0.8l3.2 3.2-9.2 9.2-4 .8.8-4z"/></svg>
  <svg class="a" style="left:1678px;top:792.4px" width="18" height="16" viewBox="0 0 18 16"><path fill="#343a40" d="M0 0h5.3v4.6H0zM6 0H18v4.6H6zM0 5.7h5.3v4.6H0zM6 5.7H18v4.6H6zM0 11.4h5.3V16H0zM6 11.4H18V16H6z"/></svg>
  <div class="a" style="left:300px;top:820.0px;width:1424px;height:1px;background:#dee2e6"></div>
  <div class="a" style="left:306px;top:829.4px;width:20px;height:20px;border:1px solid #b4bac0;border-radius:4px;background:#fff"></div>
  <div class="t td" style="margin-top:1px;left:357px;top:831.4px">10</div>
  <div class="t td" style="margin-top:1px;left:407px;top:831.4px">P20241030037</div>
  <div class="t td" style="margin-top:1px;left:557px;top:831.4px">陳麗美</div>
  <div class="t td" style="margin-top:1px;left:682px;top:831.4px">2024/10/30</div>
  <div class="t td" style="margin-top:1px;left:807px;top:831.4px">蝴蝶蘭-TWM-3</div>
  <div class="t td" style="margin-top:1px;left:994px;top:831.4px">上萬安段 0603-0000/1-5</div>
  <div class="t td" style="margin-top:1px;left:1369px;top:831.4px">0.00003</div>
  <div class="t td" style="margin-top:1px;left:1519px;top:831.4px">耕作中</div>
  <svg class="a" style="left:1611px;top:830.4px" width="21" height="19" viewBox="0 0 21 19"><path fill="#343a40" d="M1.5 3h9l-2.2 2.2H3.2v10.6h10.6v-5.1L16 8.5v8.5a1.5 1.5 0 0 1-1.5 1.5H1.5A1.5 1.5 0 0 1 0 17V4.5A1.5 1.5 0 0 1 1.5 3z M16.5 0.8l3.2 3.2-9.2 9.2-4 .8.8-4z"/></svg>
  <svg class="a" style="left:1678px;top:831.6px" width="18" height="16" viewBox="0 0 18 16"><path fill="#343a40" d="M0 0h5.3v4.6H0zM6 0H18v4.6H6zM0 5.7h5.3v4.6H0zM6 5.7H18v4.6H6zM0 11.4h5.3V16H0zM6 11.4H18V16H6z"/></svg>
</div>
</body></html>
